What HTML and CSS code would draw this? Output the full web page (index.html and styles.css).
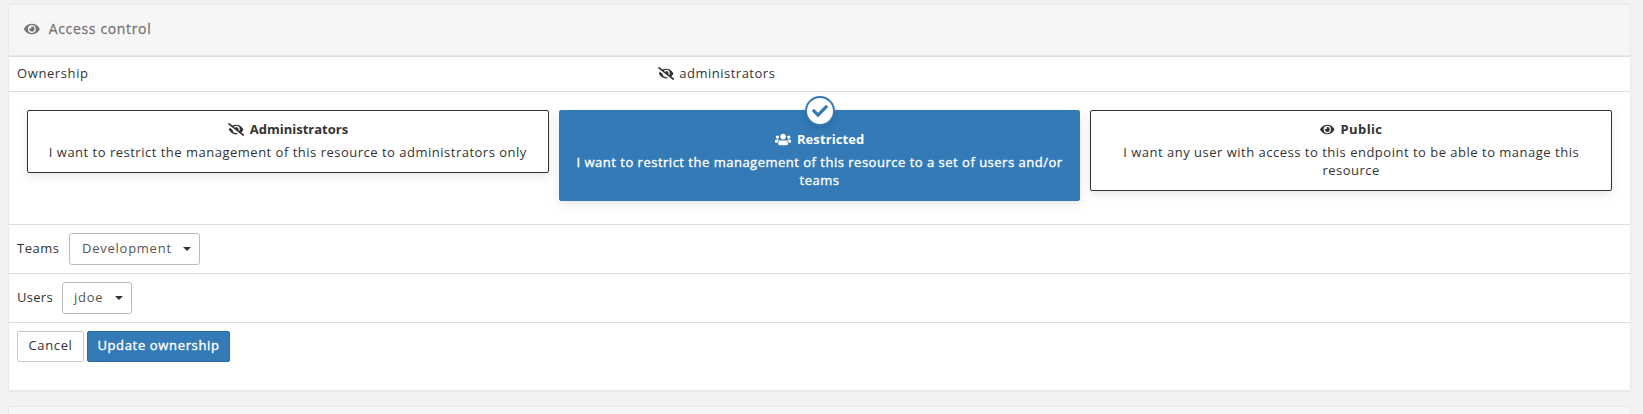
FILE: index.html
```html
<!DOCTYPE html>
<html lang="en">
<head>
<meta charset="utf-8">
<title>Access control</title>
<link rel="stylesheet" href="styles.css">
</head>
<body>
<svg class="sprite" aria-hidden="true">
  <symbol id="eye" viewBox="0 0 576 512"><path d="M572.52 241.4C518.29 135.59 410.93 64 288 64S57.68 135.64 3.48 241.41a32.35 32.35 0 0 0 0 29.19C57.71 376.41 165.07 448 288 448s230.32-71.64 284.52-177.41a32.35 32.35 0 0 0 0-29.19zM288 400a144 144 0 1 1 144-144 143.93 143.93 0 0 1-144 144zm0-240a95.31 95.31 0 0 0-25.31 3.79 47.85 47.85 0 0 1-66.9 66.9A95.78 95.78 0 1 0 288 160z"/></symbol>
  <symbol id="eye-slash" viewBox="0 0 640 512"><path d="M320 400c-75.85 0-137.25-58.71-142.9-133.11L72.2 185.82c-13.79 17.3-26.48 35.59-36.72 55.59a32.35 32.35 0 0 0 0 29.19C89.71 376.41 197.07 448 320 448c26.91 0 52.87-4 77.89-10.46L346 397.39a144.13 144.13 0 0 1-26 2.61zm313.82 58.1l-110.55-85.44a331.25 331.25 0 0 0 81.25-102.07 32.35 32.35 0 0 0 0-29.19C550.29 135.59 442.93 64 320 64a308.15 308.15 0 0 0-147.32 37.7L45.46 3.37A16 16 0 0 0 23 6.18L3.37 31.45A16 16 0 0 0 6.18 53.9l588.36 454.73a16 16 0 0 0 22.46-2.81l19.64-25.27a16 16 0 0 0-2.82-22.45zm-183.72-142l-39.3-30.38A94.75 94.75 0 0 0 416 256a94.76 94.76 0 0 0-121.31-92.21A47.65 47.65 0 0 1 304 192a46.64 46.64 0 0 1-1.54 10l-73.61-56.89A142.31 142.31 0 0 1 320 112a143.92 143.92 0 0 1 144 144c0 21.63-5.29 41.79-13.9 60.11z"/></symbol>
  <symbol id="users" viewBox="0 0 640 512"><path d="M96 224c35.3 0 64-28.7 64-64s-28.7-64-64-64-64 28.7-64 64 28.7 64 64 64zm448 0c35.3 0 64-28.7 64-64s-28.7-64-64-64-64 28.7-64 64 28.7 64 64 64zm32 32h-64c-17.6 0-33.5 7.1-45.1 18.6 40.3 22.1 68.9 62 75.1 109.4h66c17.7 0 32-14.3 32-32v-32c0-35.3-28.7-64-64-64zm-256 0c61.9 0 112-50.1 112-112S381.9 32 320 32 208 82.1 208 144s50.1 112 112 112zm76.8 32h-8.3c-20.8 10-43.9 16-68.5 16s-47.6-6-68.5-16h-8.3C179.6 288 128 339.6 128 403.2V432c0 26.5 21.5 48 48 48h288c26.5 0 48-21.5 48-48v-28.8c0-63.6-51.6-115.2-115.2-115.2zm-223.7-13.4C161.5 263.1 145.6 256 128 256H64c-35.3 0-64 28.7-64 64v32c0 17.7 14.3 32 32 32h65.9c6.3-47.4 34.9-87.3 75.2-109.4z"/></symbol>
  <symbol id="check" viewBox="0 0 512 512"><path d="M173.898 439.404l-166.4-166.4c-9.997-9.997-9.997-26.206 0-36.204l36.203-36.204c9.997-9.998 26.207-9.998 36.204 0L192 312.69 432.095 72.596c9.997-9.997 26.207-9.997 36.204 0l36.203 36.204c9.997 9.997 9.997 26.206 0 36.204l-294.4 294.401c-9.998 9.997-26.207 9.997-36.204-.001z"/></symbol>
</svg>
<section class="widget">
  <header class="widget-header">
    <svg class="icon icon-header"><use href="#eye"/></svg>
    <span class="widget-title">Access control</span>
  </header>
  <div class="row row-owner">
    <span class="owner-label">Ownership</span>
    <span class="owner-value"><svg class="icon icon-wide"><use href="#eye-slash"/></svg><span class="owner-name">administrators</span></span>
  </div>
  <div class="row row-options">
    <div class="option option-admins">
      <div class="option-title"><svg class="icon icon-wide"><use href="#eye-slash"/></svg><span class="t-admins">Administrators</span></div>
      <p class="option-text">I want to restrict the management of this resource to administrators only</p>
    </div>
    <div class="option option-selected">
      <span class="option-check"><svg class="icon icon-check"><use href="#check"/></svg></span>
      <div class="option-title"><svg class="icon icon-wide"><use href="#users"/></svg><span class="t-restricted">Restricted</span></div>
      <p class="option-text">I want to restrict the management of this resource to a set of users and/or<br>teams</p>
    </div>
    <div class="option option-public">
      <div class="option-title"><svg class="icon icon-eye"><use href="#eye"/></svg><span class="t-public">Public</span></div>
      <p class="option-text">I want any user with access to this endpoint to be able to manage this<br>resource</p>
    </div>
  </div>
  <div class="row row-select">
    <span class="label-teams">Teams</span>
    <button class="select select-teams" type="button"><span>Development</span><i class="caret"></i></button>
  </div>
  <div class="row row-select">
    <span class="label-users">Users</span>
    <button class="select select-users" type="button"><span>jdoe</span><i class="caret"></i></button>
  </div>
  <div class="row row-actions">
    <button class="btn btn-cancel" type="button">Cancel</button>
    <button class="btn btn-primary" type="button">Update ownership</button>
  </div>
</section>
<section class="widget widget-next"></section>
</body>
</html>
```
FILE: styles.css
```css
* { box-sizing: border-box; }
body {
  margin: 0;
  padding: 4px 12px 0 8px;
  height: 414px;
  overflow: hidden;
  background: #f2f2f2;
  color: #333;
  font: 13px/18px "Open Sans", "Noto Sans", sans-serif;
  letter-spacing: 0.5px;
}
.sprite { position: absolute; width: 0; height: 0; }
.icon { display: block; flex: none; fill: currentColor; height: 13px; }
.icon-wide { width: 16.25px; }
.icon-eye { width: 14.6px; }
.icon-header { width: 15.75px; height: 14px; }
.icon-check { width: 16px; height: 16px; }

.widget {
  height: 388px;
  background: #fff;
  border: 1px solid #e9e9e9;
  border-bottom-width: 2px;
  border-radius: 2px;
}
.widget-header {
  display: flex;
  align-items: center;
  gap: 9px;
  height: 51px;
  padding: 0 15px 3px;
  background: #f6f6f6;
  border-bottom: 1px solid #e9e9e9;
  color: #767676;
}
.widget-title {
  font-size: 14px;
  letter-spacing: 0.65px;
  -webkit-text-stroke: 0.3px currentColor;
}
.widget-next {
  height: 8px;
  margin-top: 14px;
  border-bottom: 0;
  border-radius: 2px 2px 0 0;
  background: #f6f6f6;
}

.row { display: flex; border-top: 1px solid #ddd; padding: 0 8px; }
.row-owner { height: 35px; align-items: center; padding-bottom: 2px; }
.owner-label { width: 641px; letter-spacing: 0.6px; }
.owner-value { display: flex; align-items: center; gap: 5px; }

.row-options { height: 133px; padding: 18px 18px 0; align-items: flex-start; gap: 10px; }
.option {
  flex: 1;
  position: relative;
  border: 1px solid #333;
  border-radius: 2px;
  padding: 9px 0;
  height: 63px;
  text-align: center;
  box-shadow: 0 3px 10px -2px rgba(60, 70, 65, 0.2);
}
.option-title {
  display: flex;
  justify-content: center;
  align-items: center;
  gap: 6px;
  height: 18px;
  font-weight: 700;
  letter-spacing: 0;
}
.t-restricted { letter-spacing: 0.1px; }
.t-public { letter-spacing: 0.4px; }
.option-text { margin: 5px 0 0; white-space: nowrap; }
.option-public { height: 81px; }
.option-selected {
  height: 91px;
  padding-top: 19px;
  background: #337ab7;
  border-color: #337ab7;
  color: #fff;
}
.option-selected .option-text { -webkit-text-stroke: 0.35px currentColor; }
.option-check {
  position: absolute;
  top: -15px;
  left: 50%;
  margin-left: -15px;
  display: flex;
  align-items: center;
  justify-content: center;
  width: 30px;
  height: 30px;
  border: 2px solid #337ab7;
  border-radius: 50%;
  background: #fff;
  color: #337ab7;
  box-shadow: 0 3px 6px rgba(0, 0, 0, 0.12);
}

.row-select { height: 49px; align-items: center; padding-bottom: 1px; }
.label-teams { width: 52px; padding-bottom: 2px; }
.label-users { width: 45px; padding-bottom: 2px; letter-spacing: 0.3px; }
button { font: inherit; letter-spacing: inherit; white-space: nowrap; }
.select {
  display: flex;
  align-items: center;
  justify-content: space-between;
  height: 32px;
  padding: 0 8px 0 12px;
  border: 1px solid #bbb;
  border-radius: 3px;
  background: #fff;
  color: #555;
}
.select span { padding-bottom: 2px; letter-spacing: 0.75px; }
.select-teams { width: 131px; }
.select-users { width: 70px; padding-left: 11px; }
.caret { border: 4px solid transparent; border-top-color: #333; border-bottom: 0; }

.row-actions { padding-top: 8px; gap: 3px; }
.btn {
  height: 31px;
  padding: 0 0 3px;
  border: 1px solid #ccc;
  border-radius: 2px;
  background: #fff;
  color: #333;
  text-align: center;
  letter-spacing: 0.65px;
}
.btn-cancel { width: 67px; }
.btn-primary {
  width: 143px;
  background: #337ab7;
  border-color: #2e6da4;
  color: #fff;
  -webkit-text-stroke: 0.35px currentColor;
}
```
